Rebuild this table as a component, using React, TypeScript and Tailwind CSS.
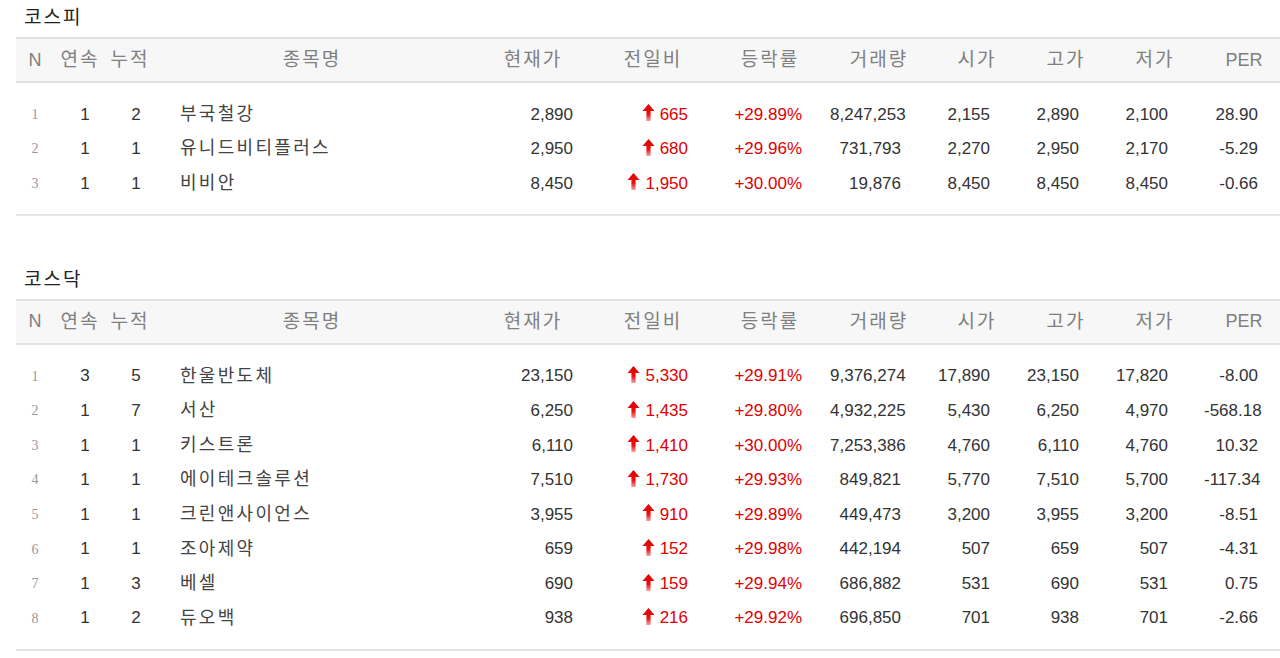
import React from 'react';

interface Row {
  n: number;
  streak: number;
  total: number;
  name: string;
  price: string;
  diff: string;
  rate: string;
  volume: string;
  open: string;
  high: string;
  low: string;
  per: string;
}

const kospi: Row[] = [
  { n: 1, streak: 1, total: 2, name: '부국철강', price: '2,890', diff: '665', rate: '+29.89%', volume: '8,247,253', open: '2,155', high: '2,890', low: '2,100', per: '28.90' },
  { n: 2, streak: 1, total: 1, name: '유니드비티플러스', price: '2,950', diff: '680', rate: '+29.96%', volume: '731,793', open: '2,270', high: '2,950', low: '2,170', per: '-5.29' },
  { n: 3, streak: 1, total: 1, name: '비비안', price: '8,450', diff: '1,950', rate: '+30.00%', volume: '19,876', open: '8,450', high: '8,450', low: '8,450', per: '-0.66' },
];

const kosdaq: Row[] = [
  { n: 1, streak: 3, total: 5, name: '한울반도체', price: '23,150', diff: '5,330', rate: '+29.91%', volume: '9,376,274', open: '17,890', high: '23,150', low: '17,820', per: '-8.00' },
  { n: 2, streak: 1, total: 7, name: '서산', price: '6,250', diff: '1,435', rate: '+29.80%', volume: '4,932,225', open: '5,430', high: '6,250', low: '4,970', per: '-568.18' },
  { n: 3, streak: 1, total: 1, name: '키스트론', price: '6,110', diff: '1,410', rate: '+30.00%', volume: '7,253,386', open: '4,760', high: '6,110', low: '4,760', per: '10.32' },
  { n: 4, streak: 1, total: 1, name: '에이테크솔루션', price: '7,510', diff: '1,730', rate: '+29.93%', volume: '849,821', open: '5,770', high: '7,510', low: '5,700', per: '-117.34' },
  { n: 5, streak: 1, total: 1, name: '크린앤사이언스', price: '3,955', diff: '910', rate: '+29.89%', volume: '449,473', open: '3,200', high: '3,955', low: '3,200', per: '-8.51' },
  { n: 6, streak: 1, total: 1, name: '조아제약', price: '659', diff: '152', rate: '+29.98%', volume: '442,194', open: '507', high: '659', low: '507', per: '-4.31' },
  { n: 7, streak: 1, total: 3, name: '베셀', price: '690', diff: '159', rate: '+29.94%', volume: '686,882', open: '531', high: '690', low: '531', per: '0.75' },
  { n: 8, streak: 1, total: 2, name: '듀오백', price: '938', diff: '216', rate: '+29.92%', volume: '696,850', open: '701', high: '938', low: '701', per: '-2.66' },
];

const cols = 'grid grid-cols-[38px_52px_48px_316px_126px_114px_120px_98px_98px_80px_98px_76px]';
const font = { fontFamily: '"Liberation Sans", "Noto Sans CJK KR", sans-serif' };

function UpArrow() {
  return (
    <svg width="13" height="17" viewBox="0 0 13 17" className="mr-[5px] mb-[3px]">
      <defs>
        <linearGradient id="upGrad" x1="0" y1="0" x2="0" y2="1">
          <stop offset="0" stopColor="#e00000" />
          <stop offset="0.6" stopColor="#e81010" />
          <stop offset="1" stopColor="#f8a0a0" />
        </linearGradient>
      </defs>
      <path d="M6.5 0 L12.5 7 L8.6 7 L8.6 17 L4.4 17 L4.4 7 L0.5 7 Z" fill="url(#upGrad)" />
    </svg>
  );
}

function Table({ title, rows }: { title: string; rows: Row[] }) {
  return (
    <section>
      <h2 className="h-[37px] flex items-center pl-[24px] text-[19px] tracking-[2px] text-[#222] font-normal">{title}</h2>
      <div className="ml-[16px]">
        {/* Header */}
        <div className={`${cols} h-[46px] items-center bg-[#f7f7f7] border-y-2 border-[#e2e2e2] text-[19px] tracking-[2px] text-[#808080]`}>
          <div className="text-center tracking-normal text-[18px]">N</div>
          <div className="text-center">연속</div>
          <div className="text-center">누적</div>
          <div className="text-center">종목명</div>
          <div className="text-center">현재가</div>
          <div className="text-center">전일비</div>
          <div className="text-center">등락률</div>
          <div className="text-center">거래량</div>
          <div className="text-center">시가</div>
          <div className="text-center">고가</div>
          <div className="text-center">저가</div>
          <div className="text-center pl-1 tracking-normal text-[18px]">PER</div>
        </div>

        {/* Body */}
        <div className="pt-[14px] pb-[13px] border-b-2 border-[#e5e5e5]">
          {rows.map((r) => (
            <div key={r.n} className={`${cols} h-[34.6px] items-center text-[17px] text-[#333]`}>
              <div className="text-center text-[14px] text-[#999]" style={{ fontFamily: '"Liberation Serif", serif' }}>
                {r.n}
              </div>
              <div className="text-center pl-[10px]">{r.streak}</div>
              <div className="text-center pl-3">{r.total}</div>
              <div className="pl-[26px] text-[18px] tracking-[2.3px] text-[#444]">{r.name}</div>
              <div className="text-right pr-[23px]">{r.price}</div>
              <div className="flex items-center justify-end pr-[22px] text-[#e00000]">
                <UpArrow />
                {r.diff}
              </div>
              <div className="text-right pr-[28px] text-[#e00000]">{r.rate}</div>
              <div className="text-right pr-[27px]">{r.volume}</div>
              <div className="text-right pr-[36px]">{r.open}</div>
              <div className="text-right pr-[27px]">{r.high}</div>
              <div className="text-right pr-[36px]">{r.low}</div>
              <div className="text-right pr-[22px]">{r.per}</div>
            </div>
          ))}
        </div>
      </div>
    </section>
  );
}

export default function App() {
  return (
    <div className="w-[1280px] h-[658px] overflow-hidden bg-white" style={font}>
      <Table title="코스피" rows={kospi} />
      <div className="h-[46px]" />
      <Table title="코스닥" rows={kosdaq} />
    </div>
  );
}
